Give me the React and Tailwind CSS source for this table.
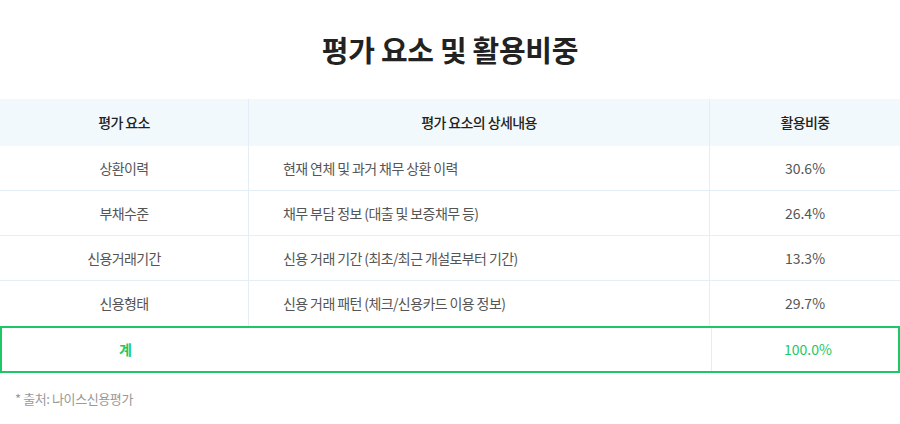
import React from "react";

const ROWS = [
  { name: "상환이력", desc: "현재 연체 및 과거 채무 상환 이력", rate: "30.6%" },
  { name: "부채수준", desc: "채무 부담 정보 (대출 및 보증채무 등)", rate: "26.4%" },
  { name: "신용거래기간", desc: "신용 거래 기간 (최초/최근 개설로부터 기간)", rate: "13.3%" },
  { name: "신용형태", desc: "신용 거래 패턴 (체크/신용카드 이용 정보)", rate: "29.7%" },
];

const cols = "grid grid-cols-[249px_461px_190px]";

export default function App() {
  return (
    <div className="w-[900px] h-[424px] bg-white font-['Noto_Sans_CJK_KR','Noto_Sans',sans-serif] text-[#333]">
      <h1 className="pt-[28px] h-[99px] text-center text-[29px] font-bold leading-[42px] text-[#222] tracking-[-0.3px]">
        평가 요소 및 활용비중
      </h1>
      <div className={`${cols} h-[47px] bg-[#f2f9fd] text-[14px] font-medium text-[#222] tracking-[-0.6px]`}>
        <div className="flex items-center justify-center border-r border-[#e4eef6]">평가 요소</div>
        <div className="flex items-center justify-center border-r border-[#e4eef6]">평가 요소의 상세내용</div>
        <div className="flex items-center justify-center">활용비중</div>
      </div>
      {ROWS.map((row, i) => (
        <div
          key={row.name}
          className={`${cols} h-[45px] text-[14px] text-[#555] ${i < ROWS.length - 1 ? "border-b border-[#e4eef6]" : ""}`}
        >
          <div className="flex items-center justify-center border-r border-[#e4eef6] tracking-[-0.6px]">{row.name}</div>
          <div className="flex items-center pl-[34px] border-r border-[#e4eef6] tracking-[-0.6px]">{row.desc}</div>
          <div className="flex items-center justify-center">{row.rate}</div>
        </div>
      ))}
      <div className={`${cols} h-[47px] border-2 border-[#1ec765] text-[14px] text-[#1ec765]`}>
        <div className="flex items-center justify-center font-bold -ml-[2px]">계</div>
        <div className="border-r border-[#e4eef6]"></div>
        <div className="flex items-center justify-center -mr-[2px]">100.0%</div>
      </div>
      <p className="pl-[15px] pt-[16px] text-[13px] text-[#999] tracking-[-0.4px]">* 출처: 나이스신용평가</p>
    </div>
  );
}
